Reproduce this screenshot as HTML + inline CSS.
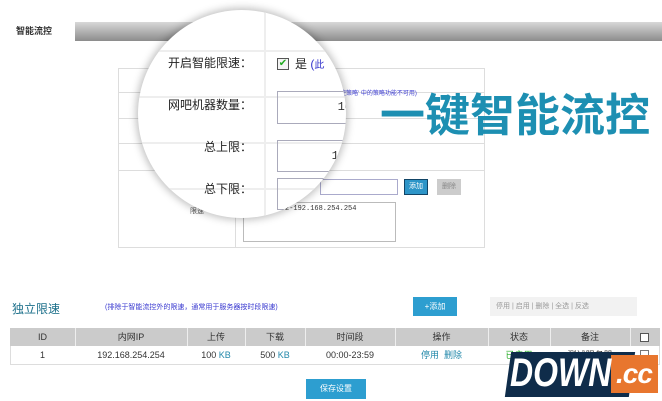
<!DOCTYPE html>
<html><head><meta charset="utf-8"><style>
*{margin:0;padding:0;box-sizing:border-box}
body{width:662px;height:401px;background:#fff;position:relative;overflow:hidden;font-family:"Liberation Sans","Noto Sans CJK SC",sans-serif;color:#333}
.a{position:absolute}
.t{font-size:9px;text-align:center;line-height:18px}
</style></head><body>
<div class="a" style="left:16px;top:24px;font-size:9px;font-weight:bold;color:#333">智能流控</div>
<div class="a" style="left:75px;top:22px;width:587px;height:19px;background:linear-gradient(#d8d8d8,#8c8c8c)"></div>
<div class="a" style="left:118px;top:68px;width:367px;height:180px;border:1px solid #ddd"></div>
<div class="a" style="left:118px;top:92px;width:367px;border-top:1px solid #ddd"></div>
<div class="a" style="left:118px;top:118px;width:367px;border-top:1px solid #ddd"></div>
<div class="a" style="left:118px;top:143px;width:367px;border-top:1px solid #ddd"></div>
<div class="a" style="left:118px;top:170px;width:367px;border-top:1px solid #ddd"></div>
<div class="a" style="left:235px;top:68px;height:180px;border-left:1px solid #ddd"></div>
<div class="a" style="left:340px;top:88px;font-size:6px;color:#3a3ad0">控策略' 中的策略功能不可用)</div>
<div class="a" style="left:320px;top:179px;width:78px;height:16px;border:1px solid #aac"></div>
<div class="a" style="left:404px;top:179px;width:24px;height:16px;background:#2d95c8;border:1px solid #146;color:#fff;font-size:7px;text-align:center;line-height:14px">添加</div>
<div class="a" style="left:437px;top:179px;width:24px;height:16px;background:#ccc;color:#888;font-size:7px;text-align:center;line-height:16px">删除</div>
<div class="a" style="left:190px;top:206px;font-size:7px;color:#555">限速</div>
<div class="a" style="left:243px;top:202px;width:153px;height:40px;border:1px solid #bbb;font-size:7px;padding:2px 20px;font-family:'Liberation Mono',monospace">.254.2-192.168.254.254</div>
<div class="a" style="left:380px;top:91px;font-size:45px;line-height:50px;font-weight:bold;color:#1d8fb2;letter-spacing:0px;white-space:nowrap">一键智能流控</div>
<div class="a" style="left:138px;top:10px;width:208px;height:208px;border-radius:50%;background:#fff;box-shadow:0 0 8px 2px rgba(0,0,0,.25);overflow:hidden">
 <div class="a" style="left:0;top:40px;width:208px;border-top:2px solid #eee"></div>
 <div class="a" style="left:0;top:86px;width:208px;border-top:2px solid #eee"></div>
 <div class="a" style="left:0;top:132px;width:208px;border-top:2px solid #eee"></div>
 <div class="a" style="left:0;top:178px;width:208px;border-top:2px solid #eee"></div>
 <div class="a" style="left:126px;top:0;height:208px;border-left:2px solid #eee"></div>
 <div class="a" style="left:0;top:44px;width:114px;text-align:right;font-size:12px;color:#222">开启智能限速：</div>
 <div class="a" style="left:0;top:86px;width:114px;text-align:right;font-size:12px;color:#222">网吧机器数量：</div>
 <div class="a" style="left:0;top:128px;width:114px;text-align:right;font-size:12px;color:#222">总上限：</div>
 <div class="a" style="left:0;top:170px;width:114px;text-align:right;font-size:12px;color:#222">总下限：</div>
 <div class="a" style="left:139px;top:48px;width:12px;height:12px;border:1px solid #555;background:#f4f4f4;color:#2a2;font-size:10px;line-height:10px;text-align:center">✔</div>
 <div class="a" style="left:157px;top:45px;font-size:12px;color:#222">是 <span style="color:#33c">(</span><span style="color:#33c;font-size:10px">此</span></div>
 <div class="a" style="left:139px;top:81px;width:80px;height:33px;border:1px solid #aab;font-size:12px;text-align:right;padding:8px 4px 0 0;font-family:'Liberation Mono',monospace">10</div>
 <div class="a" style="left:139px;top:130px;width:80px;height:32px;border:1px solid #aab;font-size:12px;text-align:right;padding:8px 10px 0 0;font-family:'Liberation Mono',monospace">10</div>
 <div class="a" style="left:139px;top:168px;width:50px;height:32px;border:1px solid #aab"></div>
</div>
<div class="a" style="left:12px;top:300px;font-size:12px;color:#1b6f8a">独立限速</div>
<div class="a" style="left:105px;top:302px;font-size:7px;color:#3a3ad0">(排除于智能流控外的限速，通常用于服务器按时段限速)</div>
<div class="a" style="left:413px;top:297px;width:44px;height:19px;background:#2d9ed0;color:#fff;font-size:8px;text-align:center;line-height:19px">+添加</div>
<div class="a" style="left:490px;top:297px;width:147px;height:19px;background:#f2f2f2;color:#999;font-size:7px;line-height:19px;padding-left:6px">停用 | 启用 | 删除 | 全选 | 反选</div>
<div class="a" style="left:10px;top:328px;width:650px;height:37px;border:1px solid #ddd"></div>
<div class="a" style="left:10px;top:328px;width:650px;height:18px;background:#cbcbcb"></div>
<div class="a t" style="left:10px;top:328px;width:65px">ID</div>
<div class="a t" style="left:75px;top:328px;width:112px">内网IP</div>
<div class="a t" style="left:187px;top:328px;width:58px">上传</div>
<div class="a t" style="left:245px;top:328px;width:60px">下载</div>
<div class="a t" style="left:305px;top:328px;width:90px">时间段</div>
<div class="a t" style="left:395px;top:328px;width:93px">操作</div>
<div class="a t" style="left:488px;top:328px;width:62px">状态</div>
<div class="a t" style="left:550px;top:328px;width:80px">备注</div>
<div class="a" style="left:75px;top:328px;height:18px;border-left:1px solid #eee"></div>
<div class="a" style="left:187px;top:328px;height:18px;border-left:1px solid #eee"></div>
<div class="a" style="left:245px;top:328px;height:18px;border-left:1px solid #eee"></div>
<div class="a" style="left:305px;top:328px;height:18px;border-left:1px solid #eee"></div>
<div class="a" style="left:395px;top:328px;height:18px;border-left:1px solid #eee"></div>
<div class="a" style="left:488px;top:328px;height:18px;border-left:1px solid #eee"></div>
<div class="a" style="left:550px;top:328px;height:18px;border-left:1px solid #eee"></div>
<div class="a" style="left:630px;top:328px;height:18px;border-left:1px solid #eee"></div>
<div class="a" style="left:640px;top:333px;width:9px;height:9px;border:1px solid #555;background:#fff"></div>
<div class="a t" style="left:10px;top:346px;width:65px">1</div>
<div class="a t" style="left:75px;top:346px;width:112px">192.168.254.254</div>
<div class="a t" style="left:187px;top:346px;width:58px">100 <span style="color:#28a">KB</span></div>
<div class="a t" style="left:245px;top:346px;width:60px">500 <span style="color:#28a">KB</span></div>
<div class="a t" style="left:305px;top:346px;width:90px">00:00-23:59</div>
<div class="a t" style="left:395px;top:346px;width:93px;color:#28a">停用 &nbsp;删除</div>
<div class="a t" style="left:488px;top:346px;width:62px;color:#2a2">已启用</div>
<div class="a t" style="left:550px;top:346px;width:80px">测试服务器</div>
<div class="a" style="left:640px;top:350px;width:9px;height:9px;border:1px solid #777;background:#fff"></div>
<div class="a" style="left:306px;top:379px;width:60px;height:20px;background:#2d9ed0;color:#fff;font-size:8px;text-align:center;line-height:20px">保存设置</div>
<div class="a" style="left:508px;top:352px;width:124px;height:45px;background:#0f2c4a;transform:skewX(-8deg)"></div>
<div class="a" style="left:611px;top:355px;width:47px;height:38px;background:#e8762e"></div>
<div class="a" style="left:510px;top:350px;font-size:40px;font-weight:bold;font-style:italic;color:#fff;line-height:46px;transform:scaleX(0.8);transform-origin:left top;white-space:nowrap">DOWN</div>
<div class="a" style="left:616px;top:357px;font-size:28px;font-weight:bold;font-style:italic;color:#fff;line-height:34px;letter-spacing:-1px">.cc</div>
</body></html>
